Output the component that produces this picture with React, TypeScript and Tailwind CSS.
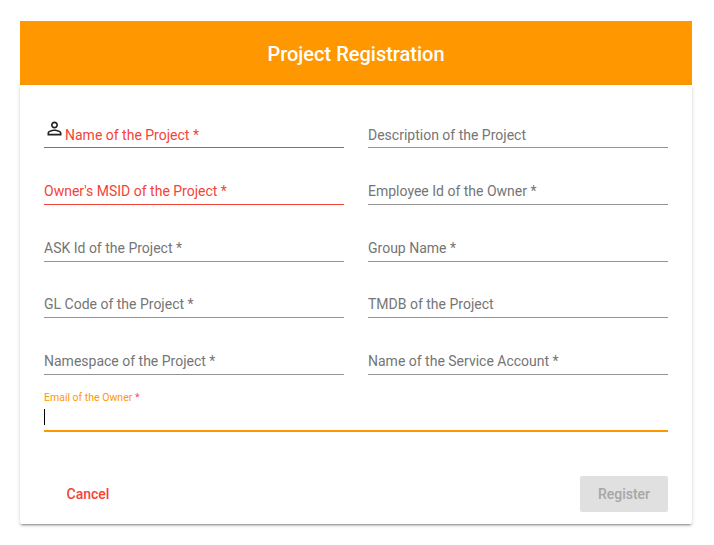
import React from "react";

type FieldProps = { label: string; required?: boolean; invalid?: boolean; icon?: boolean; low?: boolean };

function PersonIcon() {
  return (
    <svg className="h-[21px] w-[21px] shrink-0" viewBox="0 0 24 24" fill="#212121" aria-hidden="true">
      <path d="M12 5.9c1.16 0 2.1.94 2.1 2.1s-.94 2.1-2.1 2.1S9.9 9.16 9.9 8s.94-2.1 2.1-2.1m0 9c2.97 0 6.1 1.46 6.1 2.1v1.1H5.9V17c0-.64 3.13-2.1 6.1-2.1M12 4C9.79 4 8 5.79 8 8s1.79 4 4 4 4-1.79 4-4-1.79-4-4-4zm0 9c-2.67 0-8 1.34-8 4v3h16v-3c0-2.66-5.33-4-8-4z" />
    </svg>
  );
}

function Field({ label, required, invalid, icon, low }: FieldProps) {
  return (
    <label className={`flex h-[30px] flex-1 items-start whitespace-nowrap border-b text-sm leading-4 ${invalid ? "border-[#f44336] text-[#f44336]" : "border-[#949494] text-[#757575]"}`}>
      {icon && <PersonIcon />}
      <span className={low ? "pt-[9px]" : "pt-2"}>{label}{required && " *"}</span>
    </label>
  );
}

export default function App() {
  return (
    <main className="h-[545px] w-[714px] overflow-hidden bg-white pl-5 pt-[21px] font-['Roboto',sans-serif]">
      <section className="w-[672px]">
        <header className="flex h-16 items-center justify-center bg-[#ff9800] text-xl font-medium text-white">
          <h1 className="pt-[2px]">Project Registration</h1>
        </header>
        <form className="h-[439px] rounded-[2px] bg-white px-6 pt-[33px] shadow-[0_3px_1px_-2px_rgba(0,0,0,0.2),0_2px_2px_0_rgba(0,0,0,0.14),0_1px_5px_0_rgba(0,0,0,0.12)]">
          <div className="flex gap-6">
            <Field label="Name of the Project" required invalid icon low />
            <Field label="Description of the Project" low />
          </div>
          <div className="mt-[27px] flex gap-6">
            <Field label="Owner's MSID of the Project" required invalid />
            <Field label="Employee Id of the Owner" required />
          </div>
          <div className="mt-[27px] flex gap-6">
            <Field label="ASK Id of the Project" required />
            <Field label="Group Name" required />
          </div>
          <div className="mt-[26px] flex gap-6">
            <Field label="GL Code of the Project" required />
            <Field label="TMDB of the Project" />
          </div>
          <div className="mt-[27px] flex gap-6">
            <Field label="Namespace of the Project" required />
            <Field label="Name of the Service Account" required />
          </div>
          <div className="mt-[17px] h-10 border-b-2 border-[#ff9800]">
            <div className="text-[10.5px] leading-3 text-[#ff9800]">Email of the Owner <span className="text-[#ff4081]">*</span></div>
            <div className="mt-[5px] h-4 w-px bg-black" />
          </div>
          <div className="mt-11 flex items-center justify-between text-sm font-medium">
            <button type="button" className="h-9 pl-[22.5px] text-[#f44336]">Cancel</button>
            <button type="button" disabled className="h-9 w-[88px] rounded-[2px] bg-[#e0e0e0] text-[#a6a6a6]">Register</button>
          </div>
        </form>
      </section>
    </main>
  );
}
